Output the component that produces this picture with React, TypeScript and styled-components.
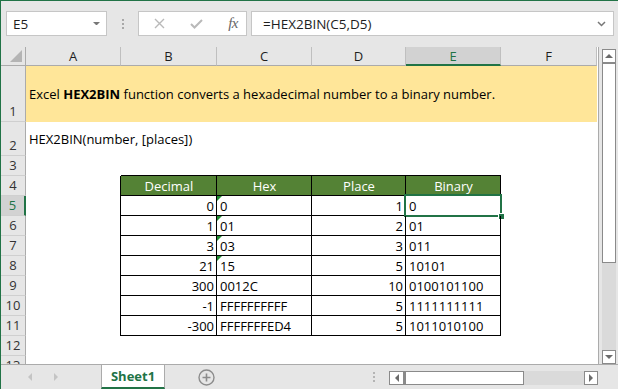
import React from 'react'
import styled, { createGlobalStyle } from 'styled-components'

const GREEN = '#217346'
const TABLE_GREEN = '#548235'
const CELL_FONT = `'Open Sans', 'Liberation Sans', sans-serif`
const UI_FONT = `'Open Sans', 'Liberation Sans', sans-serif`

const GlobalStyle = createGlobalStyle`
  html, body {
    margin: 0;
    padding: 0;
    background: #ffffff;
  }
  body {
    font-family: ${UI_FONT};
  }
  * {
    box-sizing: border-box;
  }
`

const Window = styled.div`
  width: 618px;
  height: 389px;
  display: flex;
  flex-direction: column;
  border-top: 1px solid ${GREEN};
  border-left: 1px solid ${GREEN};
  background: #e6e6e6;
  overflow: hidden;
`

/* ---------- formula bar ---------- */

const TopBar = styled.div`
  height: 46px;
  flex: none;
  display: flex;
  align-items: flex-start;
  padding: 10px 4px 0 5px;
`
const Field = styled.div<{ $width?: number }>`
  height: 25px;
  background: #ffffff;
  border: 1px solid #c6c6c6;
  display: flex;
  align-items: center;
  ${(p) => (p.$width ? `width: ${p.$width}px; flex: none;` : 'flex: 1;')}
`
const NameBox = styled(Field)`
  padding: 0 6px 0 6px;
  justify-content: space-between;
  font-size: 13.5px;
  color: #1e1e1e;
`
const Grip = styled.div`
  width: 31px;
  height: 25px;
  flex: none;
  display: flex;
  flex-direction: column;
  align-items: center;
  justify-content: center;
  gap: 2px;

  span {
    width: 2px;
    height: 2px;
    background: #a8a8a8;
  }
`
const IconBox = styled(Field)`
  justify-content: space-between;
  padding: 0 8px 0 15px;
`
const Fx = styled.span`
  font-family: 'Liberation Serif', serif;
  font-style: italic;
  font-size: 15px;
  color: #666666;
  letter-spacing: -0.5px;
`
const FormulaInput = styled(Field)`
  margin-left: 4px;
  padding: 0 7px 0 11px;
  justify-content: space-between;
  font-family: ${CELL_FONT};
  font-size: 13.5px;
  color: #1e1e1e;
`

/* ---------- sheet ---------- */

const Main = styled.div`
  flex: 1;
  display: flex;
  min-height: 0;
`
const SheetArea = styled.div`
  width: 598px;
  flex: none;
  background: #ffffff;
  border-right: 1px solid #ababab;
  overflow: hidden;
`
const Grid = styled.div`
  display: grid;
  grid-template-columns: 25px 95px 96px 95px 94px 95px 96px;
  grid-template-rows: 19px 56px 34px repeat(11, 20px);
`
const Corner = styled.div`
  background: #e6e6e6;
  border-right: 1px solid #ababab;
  border-bottom: 1px solid #ababab;
  display: flex;
  align-items: flex-end;
  justify-content: flex-end;
  padding: 0 3px 3px 0;
`
const ColHead = styled.div<{ $active?: boolean }>`
  background: ${(p) => (p.$active ? '#d2d2d2' : '#e6e6e6')};
  border-right: 1px solid #bfbfbf;
  border-bottom: ${(p) => (p.$active ? `2px solid ${GREEN}` : '1px solid #ababab')};
  color: ${(p) => (p.$active ? GREEN : '#1e1e1e')};
  font-size: 13px;
  display: flex;
  align-items: center;
  justify-content: center;
`
const RowHead = styled.div<{ $active?: boolean }>`
  background: ${(p) => (p.$active ? '#d2d2d2' : '#e6e6e6')};
  border-right: ${(p) => (p.$active ? `2px solid ${GREEN}` : '1px solid #ababab')};
  border-bottom: 1px solid #cfcfcf;
  color: ${(p) => (p.$active ? GREEN : '#333333')};
  font-size: 13px;
  line-height: 18px;
  display: flex;
  align-items: flex-end;
  justify-content: center;
  padding-bottom: 1px;
`
const Cell = styled.div<{
  $span?: number
  $right?: boolean
  $bottom?: boolean
  $align?: 'left' | 'right' | 'center'
  $fill?: string
  $head?: boolean
}>`
  position: relative;
  grid-column: span ${(p) => p.$span ?? 1};
  display: flex;
  align-items: center;
  justify-content: ${(p) =>
    p.$align === 'right' ? 'flex-end' : p.$align === 'center' ? 'center' : 'flex-start'};
  padding: 0 2px 0 3px;
  background: ${(p) => p.$fill ?? 'transparent'};
  border-right: ${(p) => (p.$right ? '1px solid #000000' : 'none')};
  border-bottom: ${(p) => (p.$bottom ? '1px solid #000000' : 'none')};
  font-family: ${CELL_FONT};
  font-size: 13px;
  color: ${(p) => (p.$head ? '#ffffff' : '#000000')};
  white-space: nowrap;
`
const Bold = styled.b`
  font-weight: 700;
`
const ErrorMark = styled.span`
  position: absolute;
  left: 0;
  top: 0;
  width: 0;
  height: 0;
  border-top: 5px solid #1e8c32;
  border-right: 5px solid transparent;
`
const Selection = styled.span`
  position: absolute;
  left: -2px;
  top: -2px;
  right: -2px;
  bottom: -2px;
  border: 2px solid ${GREEN};
  pointer-events: none;
`
const FillHandle = styled.span`
  position: absolute;
  right: -4px;
  bottom: -4px;
  width: 5px;
  height: 5px;
  background: ${GREEN};
  outline: 1px solid #ffffff;
`

/* ---------- scroll bars ---------- */

const VScroll = styled.div`
  flex: 1;
  display: flex;
  flex-direction: column;
  padding: 2px 2px 0 3px;
`
const ScrollButton = styled.div<{ $w?: number }>`
  width: ${(p) => (p.$w ? `${p.$w}px` : '100%')};
  height: 14px;
  flex: none;
  background: #ffffff;
  border: 1px solid #8a8a8a;
  display: flex;
  align-items: center;
  justify-content: center;
`
const VThumb = styled.div`
  height: 200px;
  flex: none;
  background: #ffffff;
  border: 1px solid #8a8a8a;
  border-top-width: 1px;
`
const Track = styled.div`
  flex: 1;
  background: #dadada;
`

/* ---------- sheet tabs ---------- */

const TabBar = styled.div`
  height: 25px;
  flex: none;
  display: flex;
  border-top: 1px solid #ababab;
  background: #e6e6e6;
`
const TabNav = styled.div`
  width: 100px;
  flex: none;
  display: flex;
  align-items: center;
  padding-left: 27px;
  gap: 22px;
`
const SheetTab = styled.div`
  width: 64px;
  flex: none;
  background: #ffffff;
  border-left: 1px solid #ababab;
  border-right: 1px solid #ababab;
  border-bottom: 2px solid ${GREEN};
  color: ${GREEN};
  font-weight: 700;
  font-size: 13px;
  display: flex;
  align-items: center;
  justify-content: center;
  padding-bottom: 1px;
`
const AddSheet = styled.div`
  margin-left: 33px;
  display: flex;
  align-items: center;
`
const Splitter = styled.div`
  margin-left: auto;
  margin-right: 14px;
  display: flex;
  flex-direction: column;
  justify-content: center;
  gap: 2px;

  span {
    width: 2px;
    height: 2px;
    background: #b4b4b4;
  }
`
const HScroll = styled.div`
  width: 209px;
  height: 14px;
  margin: 6px 20px 0 0;
  display: flex;
`
const HThumb = styled.div`
  width: 120px;
  flex: none;
  background: #ffffff;
  border: 1px solid #8a8a8a;
  border-left-width: 2px;
`

type Row = {
  dec: number
  hex: string
  place: number
  bin: string
  flagged?: boolean
}

const rows: Row[] = [
  { dec: 0, hex: '0', place: 1, bin: '0', flagged: true },
  { dec: 1, hex: '01', place: 2, bin: '01', flagged: true },
  { dec: 3, hex: '03', place: 3, bin: '011', flagged: true },
  { dec: 21, hex: '15', place: 5, bin: '10101', flagged: true },
  { dec: 300, hex: '0012C', place: 10, bin: '0100101100' },
  { dec: -1, hex: 'FFFFFFFFFF', place: 5, bin: '1111111111' },
  { dec: -300, hex: 'FFFFFFFED4', place: 5, bin: '1011010100' },
]

const columns = ['A', 'B', 'C', 'D', 'E', 'F']

const Triangle = ({ dir, color = '#6b6b6b', size = 4 }: { dir: 'up' | 'down' | 'left' | 'right'; color?: string; size?: number }) => {
  const pts = {
    up: `0,${size} ${size},0 ${size * 2},${size}`,
    down: `0,0 ${size * 2},0 ${size},${size}`,
    left: `${size},0 ${size},${size * 2} 0,${size}`,
    right: `0,0 0,${size * 2} ${size},${size}`,
  }[dir]
  const horiz = dir === 'up' || dir === 'down'
  return (
    <svg width={horiz ? size * 2 : size} height={horiz ? size : size * 2}>
      <polygon points={pts} fill={color} />
    </svg>
  )
}

export default function App() {
  return (
    <>
      <GlobalStyle />
      <Window>
        <TopBar>
          <NameBox $width={101}>
            <span>E5</span>
            <Triangle dir="down" color="#777777" size={3.5} />
          </NameBox>
          <Grip>
            <span />
            <span />
            <span />
          </Grip>
          <IconBox $width={109}>
            <svg width="11" height="11" viewBox="0 0 11 11">
              <path d="M1 1 L10 10 M10 1 L1 10" stroke="#b9b9b9" strokeWidth="1.4" />
            </svg>
            <svg width="13" height="10" viewBox="0 0 13 10">
              <path d="M1 5 L4.5 8.5 L12 1" stroke="#b9b9b9" strokeWidth="2" fill="none" />
            </svg>
            <Fx>fx</Fx>
          </IconBox>
          <FormulaInput>
            <span>=HEX2BIN(C5,D5)</span>
            <svg width="9" height="6" viewBox="0 0 9 6">
              <path d="M1 1 L4.5 4.5 L8 1" stroke="#777777" strokeWidth="1.5" fill="none" />
            </svg>
          </FormulaInput>
        </TopBar>

        <Main>
          <SheetArea>
            <Grid>
              <Corner>
                <svg width="12" height="12">
                  <polygon points="12,0 12,12 0,12" fill="#b4b4b4" />
                </svg>
              </Corner>
              {columns.map((c) => (
                <ColHead key={c} $active={c === 'E'}>
                  {c}
                </ColHead>
              ))}

              <RowHead>1</RowHead>
              <Cell $span={6} $fill="#ffe699">
                Excel&nbsp;<Bold>HEX2BIN</Bold>&nbsp;function converts a hexadecimal number to a binary number.
              </Cell>

              <RowHead>2</RowHead>
              <Cell $span={6}>HEX2BIN(number, [places])</Cell>

              <RowHead>3</RowHead>
              <Cell />
              <Cell $bottom />
              <Cell $bottom />
              <Cell $bottom />
              <Cell $bottom />
              <Cell />

              <RowHead>4</RowHead>
              <Cell $right />
              {['Decimal', 'Hex', 'Place', 'Binary'].map((h) => (
                <Cell key={h} $right $bottom $align="center" $fill={TABLE_GREEN} $head>
                  {h}
                </Cell>
              ))}
              <Cell />

              {rows.map((r, i) => (
                <React.Fragment key={i}>
                  <RowHead $active={i === 0}>{i + 5}</RowHead>
                  <Cell $right />
                  <Cell $right $bottom $align="right">
                    {r.dec}
                  </Cell>
                  <Cell $right $bottom>
                    {r.flagged && <ErrorMark />}
                    {r.hex}
                  </Cell>
                  <Cell $right $bottom $align="right">
                    {r.place}
                  </Cell>
                  <Cell $right $bottom>
                    {r.bin}
                    {i === 0 && (
                      <Selection>
                        <FillHandle />
                      </Selection>
                    )}
                  </Cell>
                  <Cell />
                </React.Fragment>
              ))}

              <RowHead>12</RowHead>
              <Cell $span={6} />
              <RowHead>13</RowHead>
              <Cell $span={6} />
            </Grid>
          </SheetArea>
          <VScroll>
            <ScrollButton>
              <Triangle dir="up" />
            </ScrollButton>
            <VThumb />
            <Track />
            <ScrollButton>
              <Triangle dir="down" />
            </ScrollButton>
          </VScroll>
        </Main>

        <TabBar>
          <TabNav>
            <Triangle dir="left" color="#c4c4c4" size={4} />
            <Triangle dir="right" color="#c4c4c4" size={4} />
          </TabNav>
          <SheetTab>Sheet1</SheetTab>
          <AddSheet>
            <svg width="17" height="17" viewBox="0 0 17 17">
              <circle cx="8.5" cy="8.5" r="7.5" stroke="#8c8c8c" strokeWidth="1.4" fill="none" />
              <path d="M8.5 4.5 V12.5 M4.5 8.5 H12.5" stroke="#8c8c8c" strokeWidth="1.6" />
            </svg>
          </AddSheet>
          <Splitter>
            <span />
            <span />
            <span />
          </Splitter>
          <HScroll>
            <ScrollButton $w={15}>
              <Triangle dir="left" />
            </ScrollButton>
            <HThumb />
            <Track />
            <ScrollButton $w={14}>
              <Triangle dir="right" />
            </ScrollButton>
          </HScroll>
        </TabBar>
      </Window>
    </>
  )
}
